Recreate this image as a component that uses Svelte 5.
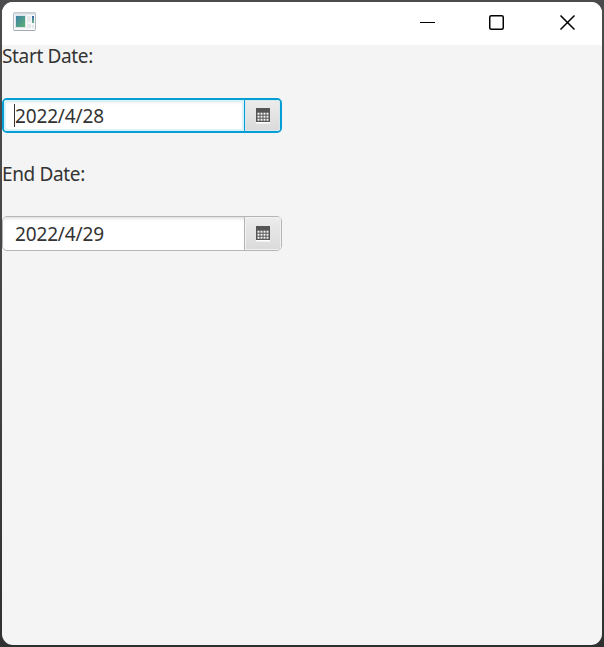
<script lang="ts">
  type Field = { id: string; label: string; value: string };

  const fields: Field[] = [
    { id: 'start', label: 'Start Date:', value: '2022/4/28' },
    { id: 'end', label: 'End Date:', value: '2022/4/29' }
  ];

  const dotColumns = [2, 5, 8, 11];
  const dotRows = [5, 8, 11];

  let focused = $state('start');
</script>

<div class="desktop">
  <div class="window">
    <header class="titlebar">
      <svg class="app-icon" width="24" height="20" viewBox="0 0 24 20">
        <defs>
          <linearGradient id="pane" x1="0" y1="0" x2="1" y2="1">
            <stop offset="0" stop-color="#397fac" />
            <stop offset="1" stop-color="#62b36d" />
          </linearGradient>
          <linearGradient id="strip" x1="0" y1="0" x2="0" y2="1">
            <stop offset="0" stop-color="#3265ad" />
            <stop offset="1" stop-color="#6bb684" />
          </linearGradient>
        </defs>
        <rect x="0.5" y="0.5" width="22" height="18" rx="1" fill="#f7f8f9" stroke="#b3b9c0" />
        <path d="M1 1.5h21" stroke="#d4d9df" stroke-width="2" />
        <path d="M1 18.5h21" stroke="#a6abb0" />
        <rect x="2.5" y="3.5" width="10" height="12" fill="url(#pane)" stroke="#dce5eb" />
        <path d="M14 4h4v6h-4zM14 12h4v4h-4z" fill="#e7e8ea" />
        <rect x="19" y="4" width="2" height="7" fill="url(#strip)" />
        <path d="M19 13h2v3h-2z" fill="#e5e8ea" />
      </svg>

      <div class="window-buttons">
        <button aria-label="Minimize">
          <svg width="16" height="16" viewBox="0 0 16 16"><path d="M1 7.5h15" /></svg>
        </button>
        <button aria-label="Maximize">
          <svg width="16" height="16" viewBox="0 0 16 16">
            <rect x="0.75" y="0.75" width="13.5" height="13.5" rx="1.5" stroke-width="1.5" />
          </svg>
        </button>
        <button aria-label="Close">
          <svg width="16" height="16" viewBox="0 0 16 16">
            <path d="M1.5 0.5l14 14M15.5 0.5l-14 14" stroke-width="1.5" />
          </svg>
        </button>
      </div>
    </header>

    <main class="content">
      {#each fields as field (field.id)}
        <div class="label" id={field.id}>{field.label}</div>
        <div class="date-picker" class:focused={focused === field.id}>
          <div
            class="text-field"
            role="textbox"
            tabindex="0"
            aria-labelledby={field.id}
            onfocus={() => (focused = field.id)}
          >
            {#if focused === field.id}<span class="caret"></span>{/if}
            <span>{field.value}</span>
          </div>
          <button class="arrow-button" aria-label="Open calendar">
            <svg width="14" height="16" viewBox="0 0 14 16">
              <path d="M0 14h14v1.5h-14z" fill="#fff" />
              <path d="M0 0h14v14h-14z" fill="#555" />
              {#each dotRows as y}
                {#each dotColumns as x}
                  <rect x={x - 0.5} y={y - 0.3} width="2" height="2" fill="#f4f4f4" />
                {/each}
              {/each}
            </svg>
          </button>
        </div>
      {/each}
    </main>
  </div>
</div>

<style>
  .desktop {
    box-sizing: border-box;
    width: 604px;
    height: 647px;
    padding: 2px;
    background: linear-gradient(#4b4b4d, #444446 50%, #303030);
  }

  .window {
    display: flex;
    flex-direction: column;
    height: 100%;
    border-radius: 11px;
    overflow: hidden;
    background: #f4f4f4;
    font-family: 'Noto Sans', 'Open Sans', sans-serif;
    font-size: 19px;
    color: #333;
  }

  .titlebar {
    display: flex;
    justify-content: space-between;
    height: 43px;
    flex: none;
    background: #fff;
  }

  .app-icon {
    margin: 10px 0 0 11px;
  }

  .window-buttons {
    display: flex;
  }

  .window-buttons button {
    display: flex;
    align-items: center;
    justify-content: center;
    width: 70px;
    padding: 0 0 1px;
    border: none;
    background: none;
  }

  .window-buttons svg {
    fill: none;
    stroke: #000;
  }

  .content {
    display: flex;
    flex-direction: column;
    gap: 30px;
    flex: 1;
  }

  .label {
    height: 23px;
    line-height: 23px;
    letter-spacing: -0.35px;
    white-space: nowrap;
  }

  .date-picker {
    display: flex;
    box-sizing: border-box;
    width: 280px;
    height: 35px;
    border: 1px solid #b5b5b5;
    border-radius: 5px;
    background: #fff;
    overflow: hidden;
  }

  .text-field {
    position: relative;
    flex: 1;
    padding-left: 12px;
    line-height: 35px;
    letter-spacing: -0.15px;
    outline: none;
    box-shadow: inset 0 3px 3px -1px #e4e4e4;
  }

  .caret {
    position: absolute;
    left: 11px;
    top: 5px;
    width: 1px;
    height: 23px;
    background: #333;
  }

  .arrow-button {
    display: flex;
    align-items: center;
    justify-content: center;
    box-sizing: border-box;
    width: 37px;
    padding: 1px 0 0;
    border: none;
    border-left: 1px solid #b5b5b5;
    background: linear-gradient(#ececec, #dadada);
    box-shadow: inset 0 0 0 1px #f1f1f1;
  }

  .focused {
    border: 2px solid #039ed3;
  }

  .focused .text-field {
    padding-left: 11px;
    line-height: 33px;
    box-shadow: inset 0 0 0 2px #d9f1f8, inset 0 4px 3px -1px #eee;
  }

  .focused .caret {
    left: 10px;
    top: 4px;
  }

  .focused .arrow-button {
    width: 36px;
    border-left: 1px solid #039ed3;
    box-shadow: inset 0 0 0 1px #d6e7ed;
  }
</style>
